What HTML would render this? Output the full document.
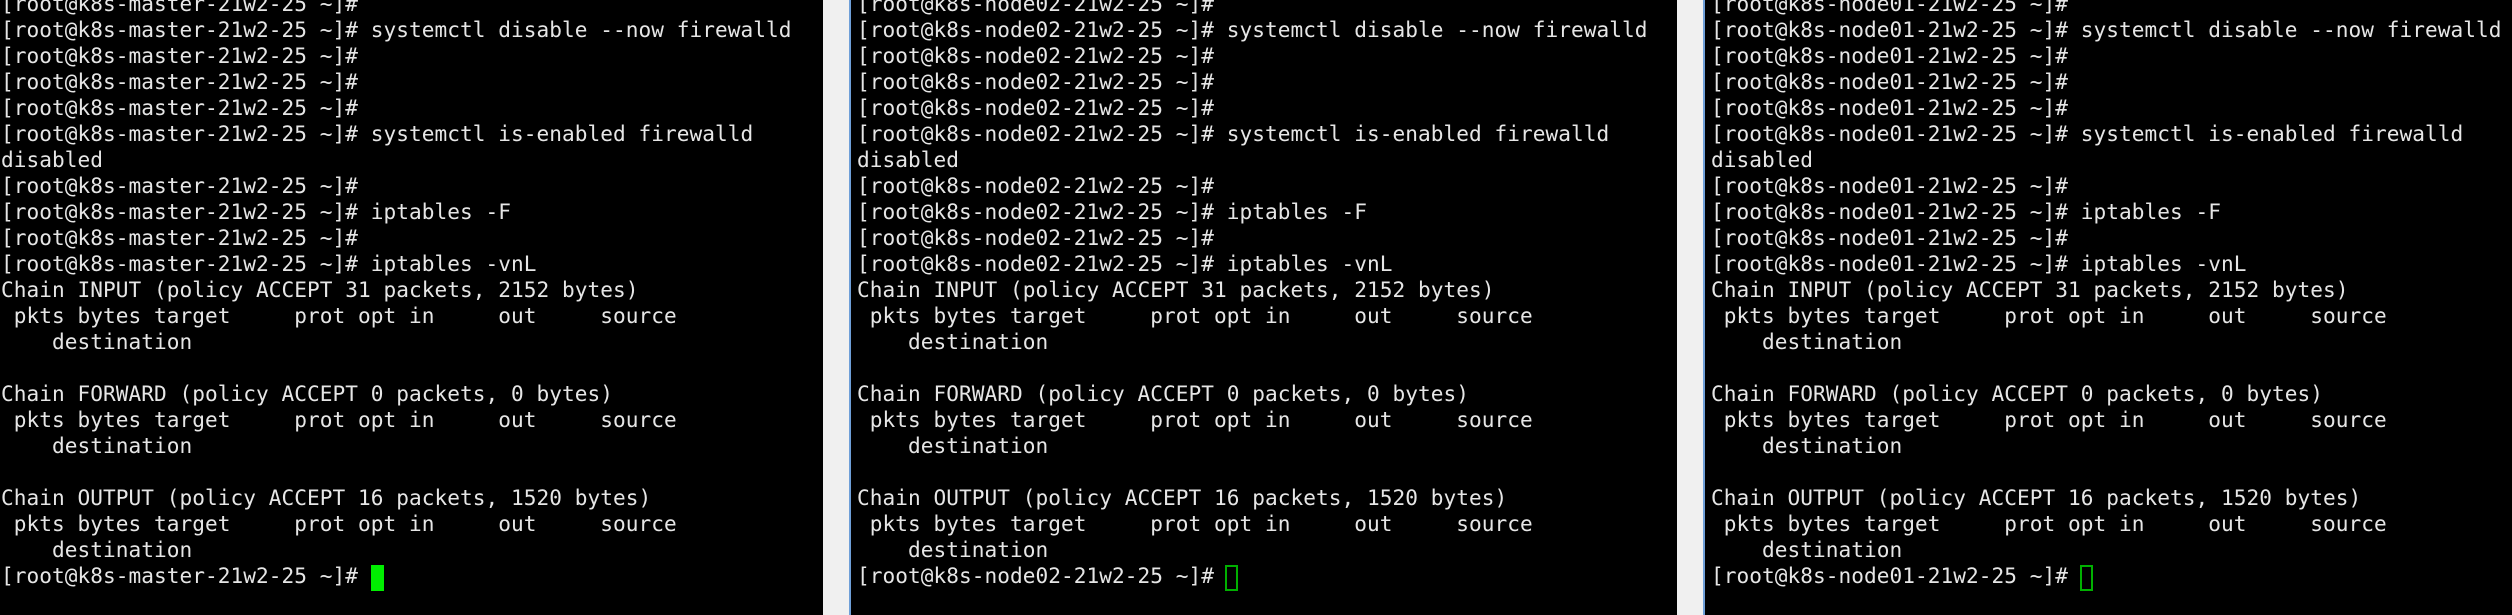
<!DOCTYPE html>
<html><head><meta charset="utf-8"><style>
html,body{margin:0;padding:0;background:#000;width:2512px;height:615px;overflow:hidden;position:relative}
pre{position:absolute;top:-9px;margin:0;font-family:"DejaVu Sans Mono","Liberation Mono",monospace;font-size:21.1px;letter-spacing:0.05px;line-height:26px;color:#e6e6e6;white-space:pre}
.g{position:absolute;top:0;height:615px;background:#f0f0f0}
.b{position:absolute;top:0;height:615px;background:#6f9fd8;width:2px}
.c1{position:absolute;background:#00ee00}
.c2{position:absolute;border:2px solid #00b000;box-sizing:border-box}
</style></head><body>
<div class="g" style="left:823px;width:26px"></div><div class="b" style="left:849px"></div>
<div class="g" style="left:1677px;width:26px"></div><div class="b" style="left:1703px"></div>
<pre style="left:1px">[root@k8s-master-21w2-25 ~]#
[root@k8s-master-21w2-25 ~]# systemctl disable --now firewalld
[root@k8s-master-21w2-25 ~]#
[root@k8s-master-21w2-25 ~]#
[root@k8s-master-21w2-25 ~]#
[root@k8s-master-21w2-25 ~]# systemctl is-enabled firewalld
disabled
[root@k8s-master-21w2-25 ~]#
[root@k8s-master-21w2-25 ~]# iptables -F
[root@k8s-master-21w2-25 ~]#
[root@k8s-master-21w2-25 ~]# iptables -vnL
Chain INPUT (policy ACCEPT 31 packets, 2152 bytes)
 pkts bytes target     prot opt in     out     source
    destination

Chain FORWARD (policy ACCEPT 0 packets, 0 bytes)
 pkts bytes target     prot opt in     out     source
    destination

Chain OUTPUT (policy ACCEPT 16 packets, 1520 bytes)
 pkts bytes target     prot opt in     out     source
    destination
[root@k8s-master-21w2-25 ~]#</pre>
<pre style="left:857px">[root@k8s-node02-21w2-25 ~]#
[root@k8s-node02-21w2-25 ~]# systemctl disable --now firewalld
[root@k8s-node02-21w2-25 ~]#
[root@k8s-node02-21w2-25 ~]#
[root@k8s-node02-21w2-25 ~]#
[root@k8s-node02-21w2-25 ~]# systemctl is-enabled firewalld
disabled
[root@k8s-node02-21w2-25 ~]#
[root@k8s-node02-21w2-25 ~]# iptables -F
[root@k8s-node02-21w2-25 ~]#
[root@k8s-node02-21w2-25 ~]# iptables -vnL
Chain INPUT (policy ACCEPT 31 packets, 2152 bytes)
 pkts bytes target     prot opt in     out     source
    destination

Chain FORWARD (policy ACCEPT 0 packets, 0 bytes)
 pkts bytes target     prot opt in     out     source
    destination

Chain OUTPUT (policy ACCEPT 16 packets, 1520 bytes)
 pkts bytes target     prot opt in     out     source
    destination
[root@k8s-node02-21w2-25 ~]#</pre>
<pre style="left:1711px">[root@k8s-node01-21w2-25 ~]#
[root@k8s-node01-21w2-25 ~]# systemctl disable --now firewalld
[root@k8s-node01-21w2-25 ~]#
[root@k8s-node01-21w2-25 ~]#
[root@k8s-node01-21w2-25 ~]#
[root@k8s-node01-21w2-25 ~]# systemctl is-enabled firewalld
disabled
[root@k8s-node01-21w2-25 ~]#
[root@k8s-node01-21w2-25 ~]# iptables -F
[root@k8s-node01-21w2-25 ~]#
[root@k8s-node01-21w2-25 ~]# iptables -vnL
Chain INPUT (policy ACCEPT 31 packets, 2152 bytes)
 pkts bytes target     prot opt in     out     source
    destination

Chain FORWARD (policy ACCEPT 0 packets, 0 bytes)
 pkts bytes target     prot opt in     out     source
    destination

Chain OUTPUT (policy ACCEPT 16 packets, 1520 bytes)
 pkts bytes target     prot opt in     out     source
    destination
[root@k8s-node01-21w2-25 ~]#</pre>
<div class="c1" style="left:371px;top:565px;width:13px;height:26px"></div>
<div class="c2" style="left:1225px;top:565px;width:13px;height:26px"></div>
<div class="c2" style="left:2080px;top:565px;width:13px;height:26px"></div>
</body></html>
